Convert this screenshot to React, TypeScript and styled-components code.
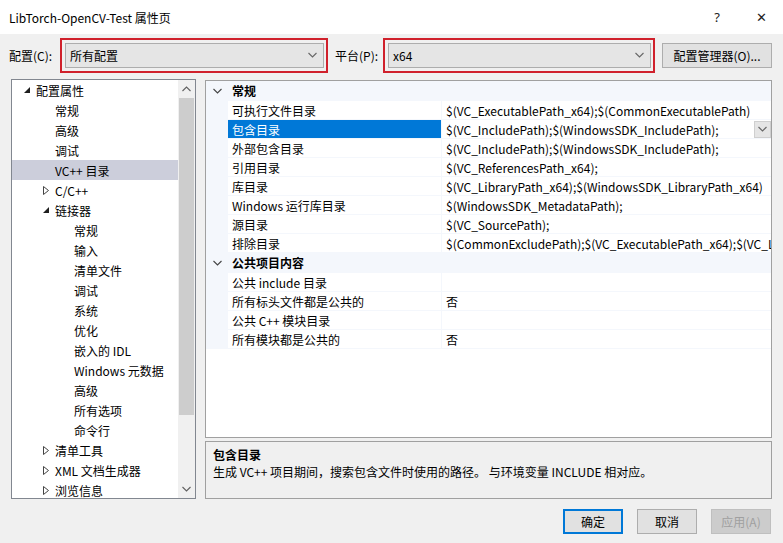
//Modules
import styled, { createGlobalStyle } from "styled-components";

//Global
const GlobalStyle = createGlobalStyle`
  html, body{
    margin:0;
    padding:0;
    background:#f0f0f0;
  }
  body{
    font-family:"Noto Sans CJK SC", "Noto Sans", sans-serif;
    font-size:12px;
    color:#000;
  }
  *{ box-sizing:border-box; }
`;

//Window
const Window = styled.div`
  width:783px;
  height:543px;
  display:flex;
  flex-direction:column;
  background:#f0f0f0;
  overflow:hidden;
`;

const TitleBar = styled.div`
  height:34px;
  flex:none;
  display:flex;
  align-items:center;
  padding-left:9px;
  background:#fff;
  font-size:12px;
`;

const TitleText = styled.span`
  flex:1;
`;

const TitleButton = styled.span`
  width:44px;
  text-align:center;
  font-family:"Noto Sans", sans-serif;
  font-size:13px;
  color:#222;
`;

//Config row
const ConfigRow = styled.div`
  height:45px;
  flex:none;
  display:flex;
  align-items:center;
  padding:0 0 3px 9px;
`;

const FieldLabel = styled.label<{ $width:number; $offset?:number }>`
  width:${p => p.$width}px;
  margin-left:${p => p.$offset ?? 0}px;
  flex:none;
`;

const Highlight = styled.div<{ $width:number }>`
  width:${p => p.$width}px;
  height:35px;
  flex:none;
  display:flex;
  padding:3px 2px 3px 3px;
  border:2px solid #d0212c;
`;

const Combo = styled.div`
  flex:1;
  display:flex;
  align-items:center;
  padding:0 6px 0 4px;
  background:#e5e5e5;
  border:1px solid #adadad;
`;

const ComboText = styled.span`
  flex:1;
`;

const ManagerButton = styled.button`
  width:110px;
  height:25px;
  margin-left:7px;
  flex:none;
  font:inherit;
  color:#000;
  background:#e1e1e1;
  border:1px solid #adadad;
  padding:0;
`;

//Main
const Main = styled.div`
  height:420px;
  flex:none;
  display:flex;
  align-items:flex-start;
  gap:9px;
  padding:0 11px;
`;

//Tree
const TreePanel = styled.div`
  width:185px;
  height:420px;
  flex:none;
  display:flex;
  background:#fff;
  border:1px solid #828790;
  overflow:hidden;
`;

const TreeList = styled.div`
  flex:1;
  overflow:hidden;
`;

const TreeRow = styled.div<{ $level:number; $selected?:boolean }>`
  height:20px;
  display:flex;
  align-items:center;
  padding-left:${p => 12 + p.$level * 19}px;
  background:${p => (p.$selected ? "#cccedb" : "transparent")};
  white-space:nowrap;
`;

const TreeArrow = styled.span`
  width:12px;
  flex:none;
  display:flex;
  align-items:center;
`;

const ScrollBar = styled.div`
  width:17px;
  flex:none;
  display:flex;
  flex-direction:column;
  background:#f0f0f0;
`;

const ScrollArrow = styled.div`
  height:18px;
  flex:none;
  display:flex;
  align-items:center;
  justify-content:center;
`;

const ScrollTrack = styled.div`
  flex:1;
  display:flex;
  flex-direction:column;
  padding:0 1px;
`;

const ScrollThumb = styled.div<{ $size:number }>`
  height:${p => p.$size}px;
  background:#cdcdcd;
`;

//Property grid
const RightColumn = styled.div`
  flex:1;
  min-width:0;
  display:flex;
  flex-direction:column;
  gap:3px;
  padding-top:1px;
`;

const PropGrid = styled.div`
  height:358px;
  background:#fff;
  border:1px solid #a0a0a0;
  overflow:hidden;
`;

const CategoryRow = styled.div`
  height:20px;
  display:flex;
  align-items:center;
  background:#f4f7fc;
  font-weight:bold;
  border-bottom:1px solid #f4f7fc;
`;

const Expander = styled.span`
  width:22px;
  flex:none;
  display:flex;
  justify-content:center;
  padding-left:1px;
`;

const CategoryName = styled.span`
  padding-left:4px;
`;

const PropRow = styled.div`
  height:19px;
  display:flex;
  border-bottom:1px solid #f4f7fc;
`;

const MarginCell = styled.span`
  width:22px;
  flex:none;
  background:#f4f7fc;
`;

const NameCell = styled.span<{ $selected?:boolean }>`
  width:214px;
  flex:none;
  display:flex;
  align-items:center;
  padding-left:4px;
  white-space:nowrap;
  color:${p => (p.$selected ? "#fff" : "#000")};
  background:${p => (p.$selected ? "#0078d7" : "#fff")};
  border-right:1px solid #f4f7fc;
`;

const ValueCell = styled.span`
  flex:1;
  min-width:0;
  display:flex;
  align-items:center;
  padding-left:4px;
  white-space:nowrap;
  overflow:hidden;
`;

const ValueText = styled.span`
  flex:1;
  min-width:0;
  overflow:hidden;
`;

const DropButton = styled.span`
  width:17px;
  height:17px;
  flex:none;
  display:flex;
  align-items:center;
  justify-content:center;
  background:#e5e5e5;
  border:1px solid #cfcfcf;
`;

//Description
const DescPanel = styled.div`
  height:58px;
  padding:4px 7px;
  background:#f0f0f0;
  border:1px solid #a0a0a0;
  line-height:17px;
`;

const DescTitle = styled.div`
  font-weight:bold;
`;

//Footer
const Footer = styled.div`
  flex:1;
  display:flex;
  justify-content:flex-end;
  align-items:flex-start;
  gap:14px;
  padding:10px 12px 0 0;
`;

const DialogButton = styled.button<{ $primary?:boolean }>`
  width:60px;
  height:25px;
  padding:0;
  font:inherit;
  color:${p => (p.disabled ? "#a0a0a0" : "#000")};
  background:${p => (p.disabled ? "#cccccc" : "#e1e1e1")};
  border:${p => (p.$primary ? "2px solid #0078d7" : p.disabled ? "1px solid #bfbfbf" : "1px solid #adadad")};
`;

//Icons
const Chevron = ({ up = false, color = "#555" }:{ up?:boolean; color?:string }) => (
  <svg width="9" height="6" viewBox="0 0 9 6">
    <polyline
      points={up ? "0.5,5 4.5,1 8.5,5" : "0.5,1 4.5,5 8.5,1"}
      fill="none"
      stroke={color}
      strokeWidth="1.1"
    />
  </svg>
);

const Expanded = () => (
  <svg width="6" height="6" viewBox="0 0 6 6">
    <polygon points="6,0 6,6 0,6" fill="#1e1e1e" />
  </svg>
);

const Collapsed = () => (
  <svg width="6" height="9" viewBox="0 0 6 9">
    <polygon points="0.5,0.5 5.5,4.5 0.5,8.5" fill="none" stroke="#444" strokeWidth="1" />
  </svg>
);

//Data
type TNode = { label:string; level:number; arrow?:"open" | "closed"; selected?:boolean };

const tree:TNode[] = [
  { label:"配置属性", level:0, arrow:"open" },
  { label:"常规", level:1 },
  { label:"高级", level:1 },
  { label:"调试", level:1 },
  { label:"VC++ 目录", level:1, selected:true },
  { label:"C/C++", level:1, arrow:"closed" },
  { label:"链接器", level:1, arrow:"open" },
  { label:"常规", level:2 },
  { label:"输入", level:2 },
  { label:"清单文件", level:2 },
  { label:"调试", level:2 },
  { label:"系统", level:2 },
  { label:"优化", level:2 },
  { label:"嵌入的 IDL", level:2 },
  { label:"Windows 元数据", level:2 },
  { label:"高级", level:2 },
  { label:"所有选项", level:2 },
  { label:"命令行", level:2 },
  { label:"清单工具", level:1, arrow:"closed" },
  { label:"XML 文档生成器", level:1, arrow:"closed" },
  { label:"浏览信息", level:1, arrow:"closed" },
];

type TProp = { name:string; value:string; selected?:boolean };

const categories:{ title:string; props:TProp[] }[] = [
  {
    title:"常规",
    props:[
      { name:"可执行文件目录", value:"$(VC_ExecutablePath_x64);$(CommonExecutablePath)" },
      { name:"包含目录", value:"$(VC_IncludePath);$(WindowsSDK_IncludePath);", selected:true },
      { name:"外部包含目录", value:"$(VC_IncludePath);$(WindowsSDK_IncludePath);" },
      { name:"引用目录", value:"$(VC_ReferencesPath_x64);" },
      { name:"库目录", value:"$(VC_LibraryPath_x64);$(WindowsSDK_LibraryPath_x64)" },
      { name:"Windows 运行库目录", value:"$(WindowsSDK_MetadataPath);" },
      { name:"源目录", value:"$(VC_SourcePath);" },
      { name:"排除目录", value:"$(CommonExcludePath);$(VC_ExecutablePath_x64);$(VC_LibraryPath_x64)" },
    ],
  },
  {
    title:"公共项目内容",
    props:[
      { name:"公共 include 目录", value:"" },
      { name:"所有标头文件都是公共的", value:"否" },
      { name:"公共 C++ 模块目录", value:"" },
      { name:"所有模块都是公共的", value:"否" },
    ],
  },
];

const App = () => {
  return(
    <>
    <GlobalStyle />
    <Window>
      <TitleBar>
        <TitleText>LibTorch-OpenCV-Test 属性页</TitleText>
        <TitleButton>?</TitleButton>
        <TitleButton>✕</TitleButton>
      </TitleBar>

      <ConfigRow>
        <FieldLabel $width={51}>配置(C):</FieldLabel>
        <Highlight $width={268}>
          <Combo>
            <ComboText>所有配置</ComboText>
            <Chevron color="#666" />
          </Combo>
        </Highlight>
        <FieldLabel $width={48} $offset={7}>平台(P):</FieldLabel>
        <Highlight $width={272}>
          <Combo>
            <ComboText>x64</ComboText>
            <Chevron color="#666" />
          </Combo>
        </Highlight>
        <ManagerButton>配置管理器(O)...</ManagerButton>
      </ConfigRow>

      <Main>
        <TreePanel>
          <TreeList>
            {tree.map((node, i) => (
              <TreeRow key={i} $level={node.level} $selected={node.selected}>
                <TreeArrow>
                  {node.arrow === "open" && <Expanded />}
                  {node.arrow === "closed" && <Collapsed />}
                </TreeArrow>
                {node.label}
              </TreeRow>
            ))}
          </TreeList>
          <ScrollBar>
            <ScrollArrow><Chevron up color="#606060" /></ScrollArrow>
            <ScrollTrack>
              <ScrollThumb $size={317} />
            </ScrollTrack>
            <ScrollArrow><Chevron color="#606060" /></ScrollArrow>
          </ScrollBar>
        </TreePanel>

        <RightColumn>
          <PropGrid>
            {categories.map(cat => (
              <div key={cat.title}>
                <CategoryRow>
                  <Expander><Chevron color="#444" /></Expander>
                  <CategoryName>{cat.title}</CategoryName>
                </CategoryRow>
                {cat.props.map(prop => (
                  <PropRow key={prop.name}>
                    <MarginCell />
                    <NameCell $selected={prop.selected}>{prop.name}</NameCell>
                    <ValueCell>
                      <ValueText>{prop.value}</ValueText>
                      {prop.selected && <DropButton><Chevron color="#666" /></DropButton>}
                    </ValueCell>
                  </PropRow>
                ))}
              </div>
            ))}
          </PropGrid>
          <DescPanel>
            <DescTitle>包含目录</DescTitle>
            <div>生成 VC++ 项目期间，搜索包含文件时使用的路径。 与环境变量 INCLUDE 相对应。</div>
          </DescPanel>
        </RightColumn>
      </Main>

      <Footer>
        <DialogButton $primary>确定</DialogButton>
        <DialogButton>取消</DialogButton>
        <DialogButton disabled>应用(A)</DialogButton>
      </Footer>
    </Window>
    </>
  )
};

export default App;
